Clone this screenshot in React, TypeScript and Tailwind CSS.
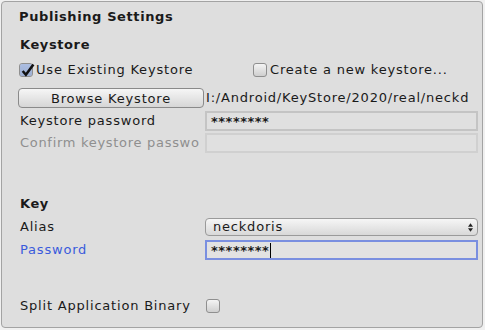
const font = { fontFamily: '"DejaVu Sans", Verdana, sans-serif' };

function Check({ checked }: { checked?: boolean }) {
  return (
    <span className="relative inline-flex h-[14px] w-[14px] shrink-0 items-center justify-center rounded-[3px] border border-[#8f8f8f] bg-gradient-to-b from-[#f4f4f4] to-[#cfcfcf]">
      {checked && (
        <>
          <span className="absolute inset-0 rounded-[2px] bg-[#7c9ad6] opacity-60" />
          <svg viewBox="0 0 14 14" className="absolute -top-[1px] left-[0px] h-[15px] w-[15px]">
            <path d="M2.5 7.5 L5.5 11 L12.5 1.5" fill="none" stroke="#111" strokeWidth="2.4" />
          </svg>
        </>
      )}
    </span>
  );
}

function Field({ children, focus, className = '' }: { children?: React.ReactNode; focus?: boolean; className?: string }) {
  return (
    <div
      className={`flex h-[20px] flex-1 items-center px-[4px] text-[13px] font-bold leading-none tracking-[0.5px] ${
        focus ? 'border-2 border-[#7a8fe0] bg-[#e2e2e2]' : 'border-2 border-[#c4c4c4] bg-[#e0e0e0]'
      } ${className}`}
    >
      {children}
    </div>
  );
}

export default function App() {
  return (
    <div className="h-[330px] w-[485px] bg-[#f0f0f0] p-[1px] text-[#1a1a1a] tracking-[0.8px]" style={font}>
      <div className="h-[327px] w-[482px] rounded-[4px] border border-[#a3a3a3] bg-[#dedede] pl-[17px] pr-[4px]">
        <div className="pt-[5px] text-[13px] font-bold leading-[20px] tracking-[0.6px]">Publishing Settings</div>
        <div className="mt-[9px] pl-[1px] text-[13px] font-bold leading-[18px] tracking-[0.6px]">Keystore</div>

        <div className="mt-[8px] flex h-[16px] items-center text-[13px]">
          <div className="flex w-[234px] items-center gap-[3px]">
            <Check checked />
            <span>Use Existing Keystore</span>
          </div>
          <div className="flex items-center gap-[3px]">
            <Check />
            <span>Create a new keystore...</span>
          </div>
        </div>

        <div className="mt-[10px] flex h-[20px] items-center text-[13px]">
          <button className="-ml-[1px] h-[20px] w-[186px] rounded-[4px] border border-[#8a8a8a] bg-gradient-to-b from-[#f6f6f6] to-[#d6d6d6] text-[13px] leading-none tracking-[0.8px]">
            Browse Keystore
          </button>
          <span className="ml-[2px] whitespace-nowrap">I:/Android/KeyStore/2020/real/neckd</span>
        </div>

        <div className="mt-[3px] flex h-[20px] items-center text-[13px]">
          <span className="w-[186px] shrink-0 pl-[1px]">Keystore password</span>
          <Field>********</Field>
        </div>
        <div className="mt-[2px] flex h-[20px] items-center text-[13px]">
          <span className="w-[186px] shrink-0 whitespace-nowrap pl-[1px] tracking-[0.7px] text-[#8f8f8f]">Confirm keystore passwo</span>
          <Field className="border-[#d0d0d0]" />
        </div>

        <div className="mt-[42px] pl-[1px] text-[13px] font-bold leading-[18px] tracking-[0.6px]">Key</div>

        <div className="mt-[4px] flex h-[20px] items-center text-[13px]">
          <span className="w-[186px] shrink-0 pl-[1px]">Alias</span>
          <div className="flex h-[18px] flex-1 items-center justify-between rounded-[4px] border border-[#9a9a9a] bg-gradient-to-b from-[#f6f6f6] to-[#d8d8d8] pl-[7px] pr-[4px] text-[13px]">
            <span>neckdoris</span>
            <svg viewBox="0 0 6 10" className="h-[9px] w-[5px]">
              <path d="M0 4 L3 0 L6 4 Z M0 6 L3 10 L6 6 Z" fill="#222" />
            </svg>
          </div>
        </div>
        <div className="mt-[3px] flex h-[20px] items-center text-[13px]">
          <span className="w-[186px] shrink-0 pl-[1px] text-[#3a5bdc]">Password</span>
          <Field focus>
            ********<span className="ml-[1px] inline-block h-[15px] w-[1px] bg-black" />
          </Field>
        </div>

        <div className="mt-[38px] flex h-[16px] items-center text-[13px]">
          <span className="w-[187px] shrink-0 pl-[1px]">Split Application Binary</span>
          <Check />
        </div>
      </div>
    </div>
  );
}
